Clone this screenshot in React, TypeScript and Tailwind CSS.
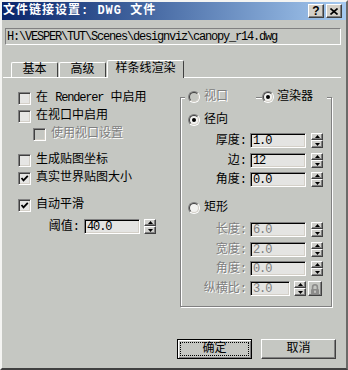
import React from "react";

const fieldCls =
  "h-[15px] border border-t-[#808080] border-l-[#808080] border-b-white border-r-white shadow-[inset_1px_1px_0_#000,inset_-1px_-1px_0_#d4d0c8] bg-[#e4e4e2] flex items-center pl-[2px] text-[12px] tracking-[-1.1px]";
const raised =
  "border border-t-white border-l-white border-b-[#404040] border-r-[#404040] shadow-[inset_-1px_-1px_0_#808080]";
const dim = "text-[#808080] [text-shadow:1px_1px_0_#fff]";

function Checkbox({ checked = false, disabled = false }: { checked?: boolean; disabled?: boolean }) {
  return (
    <div
      className={`w-[13px] h-[13px] shrink-0 border border-t-[#808080] border-l-[#808080] border-b-white border-r-white shadow-[inset_1px_1px_0_#404040,inset_-1px_-1px_0_#d4d0c8] flex items-center justify-center ${
        disabled ? "bg-[#c5c7c2]" : "bg-[#e6e6e4]"
      }`}
    >
      {checked && (
        <svg width="9" height="9" viewBox="0 0 9 9">
          <polyline points="1.5,4 3.5,6.3 7.8,1.8" fill="none" stroke="#000" strokeWidth="1.8" />
        </svg>
      )}
    </div>
  );
}

function Radio({ checked = false, disabled = false }: { checked?: boolean; disabled?: boolean }) {
  return (
    <div className="w-[12px] h-[12px] shrink-0 rounded-full border border-t-[#808080] border-l-[#808080] border-b-white border-r-white">
      <div
        className={`w-full h-full rounded-full border border-t-[#404040] border-l-[#404040] border-b-[#d4d0c8] border-r-[#d4d0c8] flex items-center justify-center ${
          disabled ? "bg-[#c5c7c2]" : "bg-[#f2f2f0]"
        }`}
      >
        {checked && <div className="w-[4px] h-[4px] rounded-full bg-black" />}
      </div>
    </div>
  );
}

function Spinner() {
  return (
    <div className="w-[12px] h-[15px] shrink-0 flex flex-col bg-[#d0d0cc]">
      <div className={`h-[7px] ${raised} flex items-center justify-center`}>
        <svg width="5" height="3" viewBox="0 0 5 3">
          <path d="M2.5 0L5 3H0Z" fill="#000" />
        </svg>
      </div>
      <div className={`h-[8px] ${raised} flex items-center justify-center`}>
        <svg width="5" height="3" viewBox="0 0 5 3">
          <path d="M0 0H5L2.5 3Z" fill="#000" />
        </svg>
      </div>
    </div>
  );
}

function CheckRow({
  label,
  checked,
  disabled,
  indent,
}: {
  label: React.ReactNode;
  checked?: boolean;
  disabled?: boolean;
  indent?: boolean;
}) {
  return (
    <div className={`h-[18px] flex items-center gap-[5px] ${indent ? "pl-[15px]" : ""}`}>
      <Checkbox checked={checked} disabled={disabled} />
      <span className={disabled ? dim : ""}>{label}</span>
    </div>
  );
}

function FieldRow({
  label,
  value,
  disabled,
  className = "",
}: {
  label: string;
  value: string;
  disabled?: boolean;
  className?: string;
}) {
  return (
    <div className={`h-[15px] flex items-center ${className}`}>
      <span className={`w-[59px] text-right ${disabled ? dim : ""}`}>{label}</span>
      <div className={`ml-[3px] w-[56px] ${fieldCls} ${disabled ? "text-[#808080]" : ""}`}>{value}</div>
      <div className="ml-[5px]">
        <Spinner />
      </div>
    </div>
  );
}

export default function App() {
  return (
    <div className="w-[348px] h-[370px] overflow-hidden bg-[#c5c7c2] border-2 border-l-[#f4f4f2] border-t-[#f4f4f2] border-r-[#6a6a68] border-b-[#404040] font-['Liberation_Mono','Noto_Sans_CJK_SC',monospace] text-[12px] text-black leading-none">
      {/* title bar */}
      <div className="h-[18px] flex items-center bg-linear-to-r from-[#0a246a] to-[#a6caf0] pl-[1px] pr-[4px]">
        <span className="text-white font-bold tracking-[1px]">文件链接设置: DWG 文件</span>
        <div className="ml-auto flex gap-[2px]">
          <div className={`w-[16px] h-[14px] bg-[#d4d0c8] ${raised} flex items-center justify-center font-bold text-[12px] font-['Liberation_Sans',sans-serif]`}>
            ?
          </div>
          <div className={`w-[16px] h-[14px] bg-[#d4d0c8] ${raised} flex items-center justify-center`}>
            <svg width="8" height="7" viewBox="0 0 8 7">
              <path d="M0.5 0.5L7.5 6.5M7.5 0.5L0.5 6.5" stroke="#000" strokeWidth="1.6" />
            </svg>
          </div>
        </div>
      </div>

      {/* path */}
      <div className="mt-[8px] ml-[3px] w-[336px] h-[17px] border border-t-[#808080] border-l-[#808080] border-b-white border-r-white flex items-center pl-[1px] text-[12px] tracking-[-1.2px]">
        H:\VESPER\TUT\Scenes\designviz\canopy_r14.dwg
      </div>

      {/* tabs */}
      <div className="mt-[15px] ml-[1px] w-[338px] h-[18px] border-b border-b-white flex items-end pl-[8px]">
        <div className="w-[47px] h-[15px] border-l border-t border-r border-l-white border-t-white border-r-[#404040] rounded-t-[2px] flex items-center justify-center">
          基本
        </div>
        <div className="ml-[1px] w-[47px] h-[15px] border-l border-t border-r border-l-white border-t-white border-r-[#404040] rounded-t-[2px] flex items-center justify-center">
          高级
        </div>
        <div className="ml-[1px] w-[77px] h-[18px] -mb-px bg-[#c5c7c2] border-l border-t border-r border-l-white border-t-white border-r-[#404040] rounded-t-[2px] flex items-center justify-center pb-[1px]">
          样条线渲染
        </div>
      </div>

      {/* panel */}
      <div className="flex flex-col">
        <div className="flex items-start">
          <div className="w-[178px] pl-[16px] pt-[11px]">
            <CheckRow
              label={
                <>
                  在 <span className="tracking-[-1.2px]">Renderer</span> 中启用
                </>
              }
            />
            <CheckRow label="在视口中启用" />
            <CheckRow label="使用视口设置" disabled indent />
            <div className="mt-[8px]">
              <CheckRow label="生成贴图坐标" />
              <CheckRow label="真实世界贴图大小" checked />
            </div>
            <div className="mt-[9px]">
              <CheckRow label="自动平滑" checked />
            </div>
            <div className="mt-[5px] h-[15px] flex items-center">
              <span className="w-[62px] text-right">阈值:</span>
              <div className={`ml-[4px] w-[56px] ${fieldCls}`}>40.0</div>
              <div className="ml-[4px]">
                <Spinner />
              </div>
            </div>
          </div>

          {/* render group */}
          <div className="mt-[19px] w-[152px] h-[210px] border border-[#808080] shadow-[inset_1px_1px_0_#fff,1px_1px_0_#fff]">
            <div className="-mt-[8px] h-[14px] flex items-center">
              <div className="ml-[4px] w-[71px] h-full pl-[3px] bg-[#c5c7c2] flex items-center gap-[4px]">
                <Radio disabled />
                <span className={dim}>视口</span>
              </div>
              <div className="ml-[6px] w-[65px] h-full bg-[#c5c7c2] flex items-center gap-[3px]">
                <Radio checked />
                <span>渲染器</span>
              </div>
            </div>
            <div className="pl-[7px]">
              <div className="mt-[9px] h-[14px] flex items-center gap-[4px]">
                <Radio checked />
                <span>径向</span>
              </div>
              <FieldRow className="mt-[6px]" label="厚度:" value="1.0" />
              <FieldRow className="mt-[5px]" label="边:" value="12" />
              <FieldRow className="mt-[4px]" label="角度:" value="0.0" />
              <div className="mt-[14px] h-[14px] flex items-center gap-[4px]">
                <Radio />
                <span>矩形</span>
              </div>
              <FieldRow className="mt-[7px]" label="长度:" value="6.0" disabled />
              <FieldRow className="mt-[5px]" label="宽度:" value="2.0" disabled />
              <FieldRow className="mt-[4px]" label="角度:" value="0.0" disabled />
              <div className="mt-[5px] h-[15px] flex items-center">
                <span className={`w-[59px] text-right ${dim}`}>纵横比:</span>
                <div className={`ml-[3px] w-[40px] ${fieldCls} text-[#808080]`}>3.0</div>
                <div className="ml-[4px]">
                  <Spinner />
                </div>
                <div className={`ml-[2px] w-[14px] h-[15px] ${raised} flex items-center justify-center`}>
                  <svg width="10" height="12" viewBox="0 0 10 12">
                    <path d="M2.6 6V4.2a2.4 2.4 0 0 1 4.8 0V6" stroke="#8c8c8a" strokeWidth="1.6" fill="none" />
                    <rect x="1" y="6" width="8" height="5.5" rx="1" fill="#8c8c8a" />
                    <rect x="4.3" y="7.6" width="1.4" height="2.2" fill="#d8d8d6" />
                  </svg>
                </div>
              </div>
            </div>
          </div>
        </div>

        {/* buttons */}
        <div className="mt-[32px] ml-[175px] flex gap-[9px]">
          <div className="w-[75px] h-[20px] border border-black flex">
            <div className="flex-1 flex p-[1px] shadow-[inset_1px_1px_0_#fff,inset_-1px_-1px_0_#808080]">
              <div className="flex-1 m-[1px] border border-dotted border-black flex items-center justify-center">
                确定
              </div>
            </div>
          </div>
          <div className={`w-[75px] h-[20px] ${raised} flex items-center justify-center`}>取消</div>
        </div>
      </div>
    </div>
  );
}
